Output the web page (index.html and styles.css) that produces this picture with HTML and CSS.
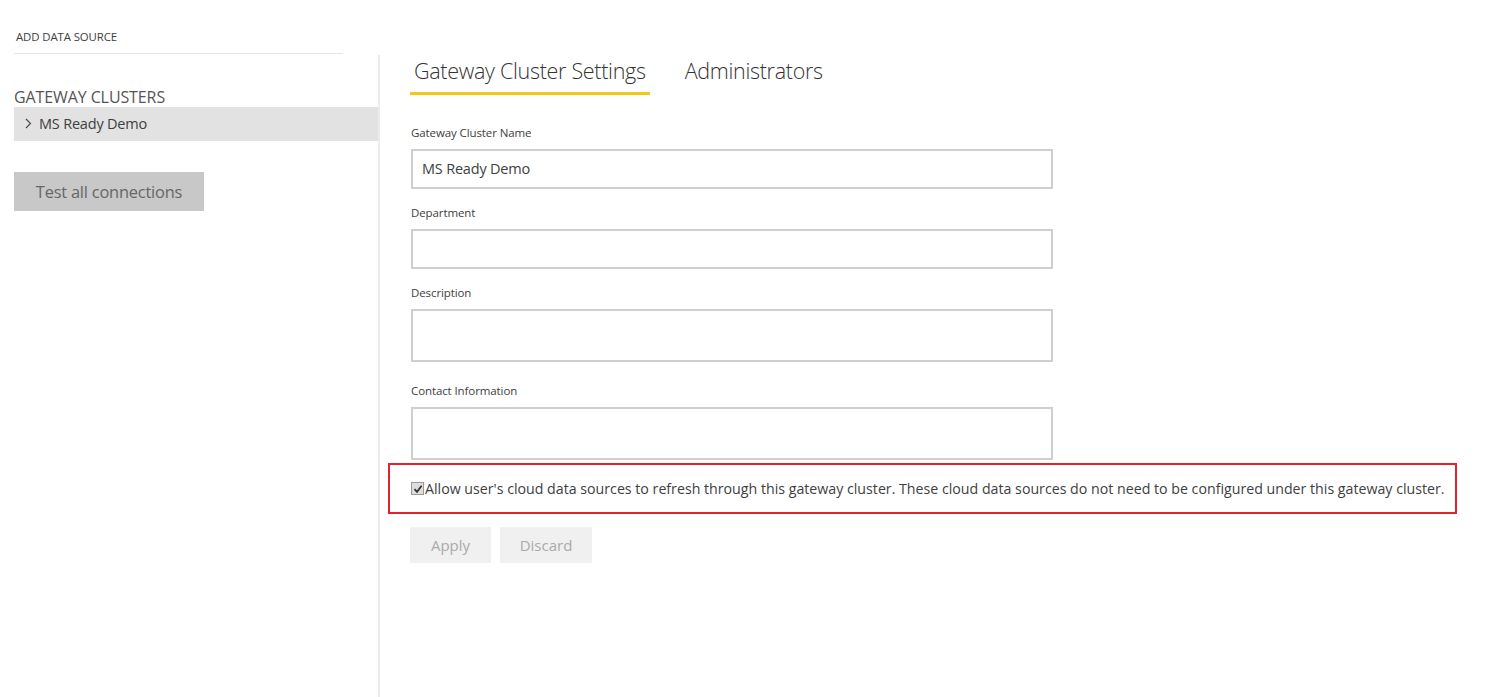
FILE: index.html
```html
<!DOCTYPE html>
<html>
<head>
<meta charset="utf-8">
<link rel="stylesheet" href="styles.css">
</head>
<body>
<div class="page">
  <aside class="sidebar">
    <div class="add-source">ADD DATA SOURCE</div>
    <div class="clusters-title">GATEWAY CLUSTERS</div>
    <div class="cluster-row"><svg class="chev" width="7" height="11" viewBox="0 0 7 11"><path d="M1 1 L5.5 5.5 L1 10" fill="none" stroke="#444" stroke-width="1.1"/></svg>MS Ready Demo</div>
    <button class="test-btn">Test all connections</button>
  </aside>
  <main class="content">
    <nav class="tabs">
      <div class="tab active">Gateway Cluster Settings</div>
      <div class="tab">Administrators</div>
    </nav>
    <form class="form">
      <label class="field-label">Gateway Cluster Name</label>
      <div class="input">MS Ready Demo</div>
      <label class="field-label">Department</label>
      <div class="input"></div>
      <label class="field-label">Description</label>
      <div class="input tall"></div>
      <label class="field-label">Contact Information</label>
      <div class="input tall last"></div>
    </form>
    <div class="highlight">
      <span class="checkbox"><svg width="10" height="10" viewBox="0 0 10 10"><path d="M1.5 5.2 L4 7.8 L8.6 1.8" fill="none" stroke="#333" stroke-width="1.8"/></svg></span>
      <span class="allow-text">Allow user's cloud data sources to refresh through this gateway cluster. These cloud data sources do not need to be configured under this gateway cluster.</span>
    </div>
    <div class="actions">
      <button class="act apply">Apply</button>
      <button class="act discard">Discard</button>
    </div>
  </main>
</div>
</body>
</html>
```

FILE: styles.css
```css
html, body {
  margin: 0;
  padding: 0;
  background: #fff;
}
body {
  font-family: "Open Sans", "Noto Sans", sans-serif;
  color: #404040;
}
.page {
  display: flex;
  height: 697px;
}
.sidebar {
  width: 364px;
  padding-left: 14px;
  padding-top: 28px;
  display: flex;
  flex-direction: column;
  align-items: flex-start;
}
.add-source {
  font-size: 11.4px;
  color: #404040;
  padding-left: 2px;
  width: 327px;
  height: 25px;
  line-height: 18px;
  border-bottom: 1px solid #e6e6e6;
  letter-spacing: -0.1px;
}
.clusters-title {
  margin-top: 33px;
  font-size: 16px;
  color: #555;
  height: 20px;
  line-height: 20px;
  letter-spacing: -0.1px;
}
.cluster-row {
  align-self: stretch;
  height: 34px;
  line-height: 33px;
  background: #e2e2e2;
  font-size: 14.5px;
  color: #404040;
  padding-left: 11px;
  padding-bottom: 1px;
  box-sizing: border-box;
  letter-spacing: -0.2px;
  display: flex;
  align-items: center;
}
.chev {
  margin-right: 7px;
}
.test-btn {
  margin-top: 31px;
  width: 190px;
  height: 39px;
  border: none;
  background: #c8c8c8;
  color: #666;
  font-family: inherit;
  font-size: 16.4px;
  letter-spacing: -0.2px;
  padding: 0;
}
.content {
  flex: 1;
  border-left: 2px solid #ececec;
  margin-top: 55px;
  padding-left: 31px;
}
.tabs {
  display: flex;
  gap: 31px;
  margin-left: -1px;
}
.tab {
  font-size: 21.5px;
  font-weight: 300;
  color: #333;
  height: 37px;
  line-height: 32px;
  padding: 0 4px;
  letter-spacing: -0.3px;
}
.tab.active {
  border-bottom: 3px solid #f2c811;
}
.form {
  display: flex;
  flex-direction: column;
  width: 642px;
  margin-top: 30px;
}
.field-label {
  font-size: 11.5px;
  color: #404040;
  height: 16px;
  line-height: 16px;
  margin-bottom: 8px;
  letter-spacing: -0.1px;
}
.input {
  box-sizing: border-box;
  height: 40px;
  border: 2px solid #cfcfcf;
  margin-bottom: 16px;
  font-size: 14.5px;
  line-height: 36px;
  padding-left: 9px;
  color: #404040;
  letter-spacing: -0.2px;
}
.input.tall {
  height: 53px;
  margin-bottom: 21px;
}
.input.last {
  margin-bottom: 0;
}
.highlight {
  box-sizing: border-box;
  margin-left: -23px;
  margin-top: 3px;
  width: 1069px;
  height: 51px;
  border: 2px solid #e8202a;
  display: flex;
  align-items: center;
  padding-left: 21px;
}
.checkbox {
  width: 11px;
  height: 11px;
  border: 1px solid #999;
  background: #dcdcdc;
  display: inline-flex;
  align-items: center;
  justify-content: center;
  margin-right: 1px;
}
.allow-text {
  font-size: 14.2px;
  color: #404040;
  letter-spacing: 0;
}
.actions {
  display: flex;
  gap: 9px;
  margin-top: 13px;
  margin-left: -1px;
}
.act {
  height: 36px;
  border: none;
  background: #f0f0f0;
  color: #aaa;
  font-family: inherit;
  font-size: 15px;
  padding: 0;
}
.apply { width: 81px; }
.discard { width: 92px; }
```
